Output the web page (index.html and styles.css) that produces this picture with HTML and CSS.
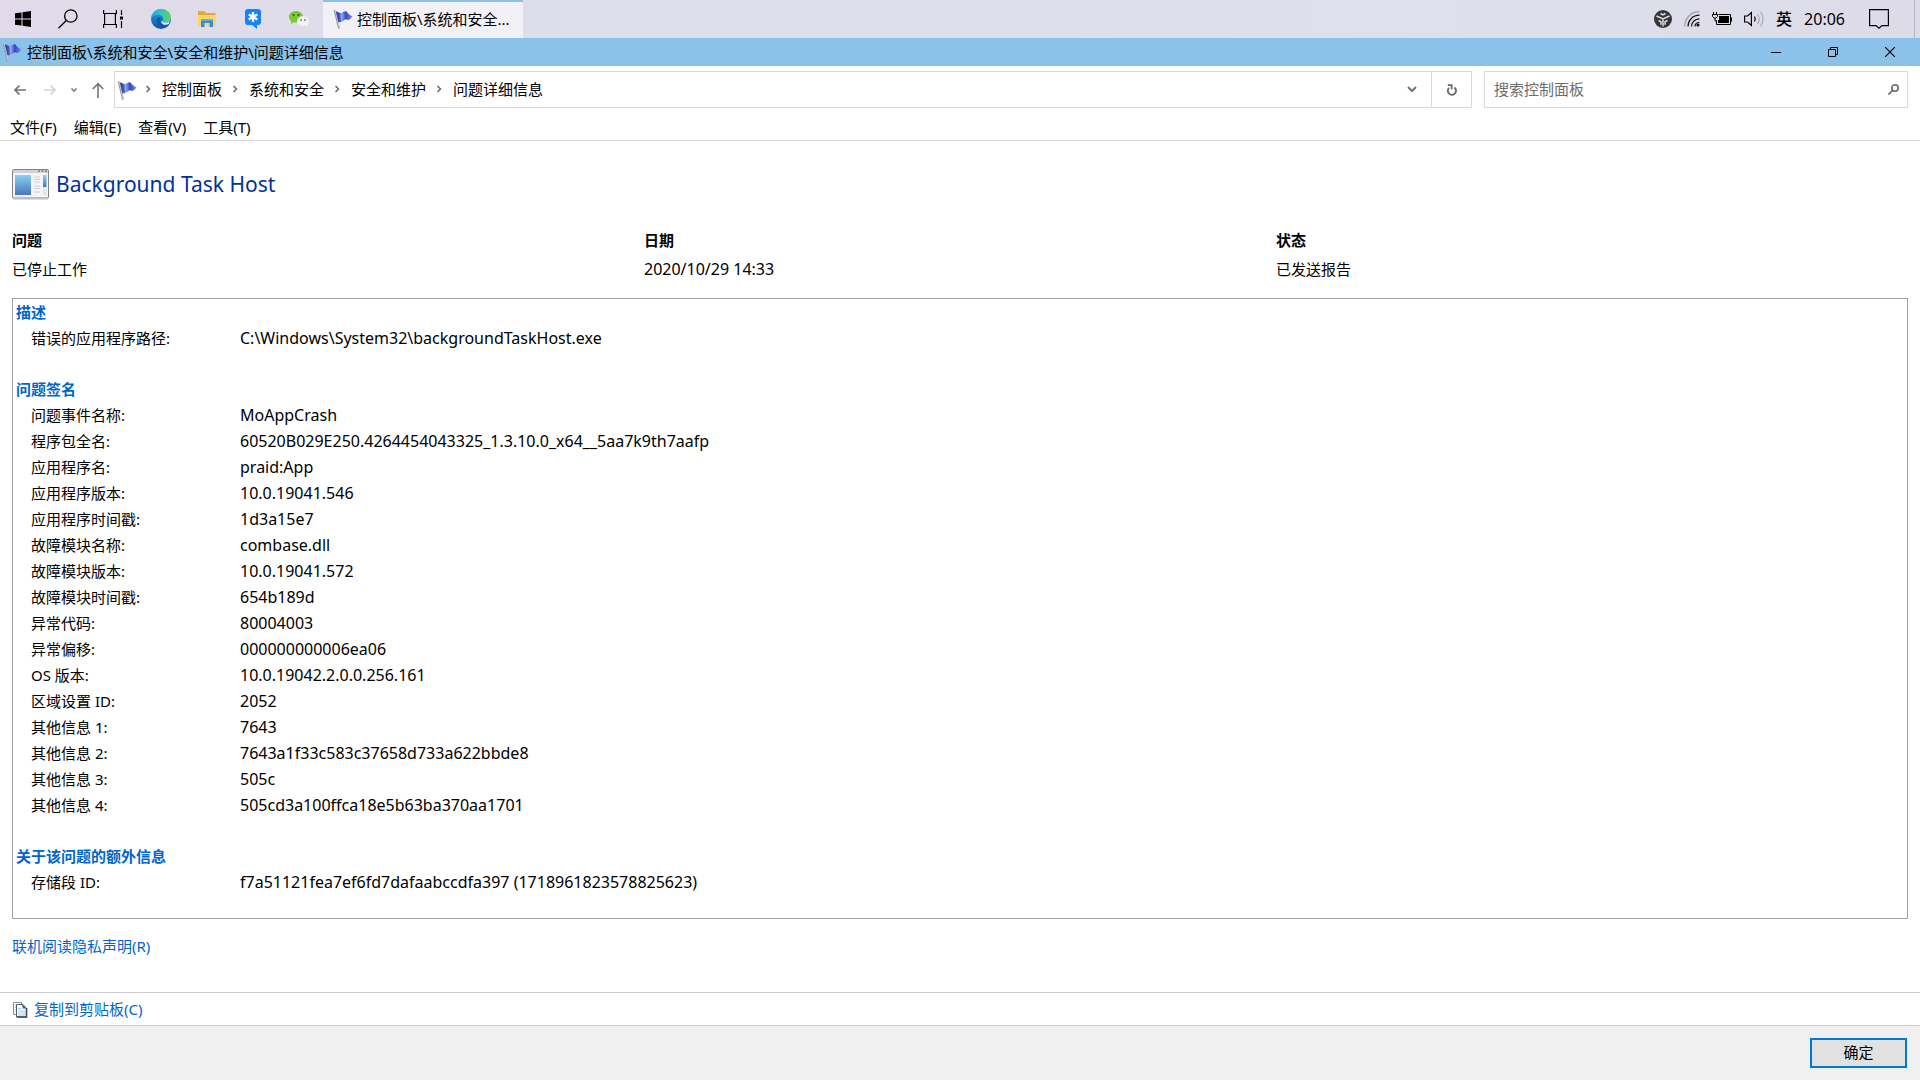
FILE: index.html
```html
<!DOCTYPE html>
<html lang="zh-CN">
<head>
<meta charset="utf-8">
<title>控制面板\系统和安全\安全和维护\问题详细信息</title>
<link rel="stylesheet" href="styles.css">
</head>
<body>
<svg class="defs" aria-hidden="true">
  <defs>
    <linearGradient id="flagBlue" x1="0" y1="0" x2="1" y2="0"><stop offset="0" stop-color="#3040a8"/><stop offset=".35" stop-color="#8faaf5"/><stop offset=".6" stop-color="#3346c0"/><stop offset="1" stop-color="#7a98ee"/></linearGradient>
    <linearGradient id="edgeA" x1="0" y1="0" x2="1" y2="0"><stop offset="0" stop-color="#2aa4dc"/><stop offset=".5" stop-color="#36c2c4"/><stop offset="1" stop-color="#62d455"/></linearGradient>
    <linearGradient id="edgeB" x1="0" y1="0" x2="0" y2="1"><stop offset="0" stop-color="#1b9de2"/><stop offset="1" stop-color="#0c59a4"/></linearGradient>
    <linearGradient id="paneBlue" x1="0" y1="0" x2="0" y2="1"><stop offset="0" stop-color="#8fd0f0"/><stop offset=".45" stop-color="#6ba7dc"/><stop offset="1" stop-color="#4a76b8"/></linearGradient>
    <symbol id="flag" viewBox="0 0 20 20">
      <path d="M.6 1l2.200.2 4.200 18-2 .5z" fill="#96989e"/><path d="M1.400 1.200l1 .1 3.800 17.500" fill="none" stroke="#dcdde2" stroke-width=".8"/>
      <path d="M3 2.500c2.500.4 3.500 2 5.500 1.300C10.500 3 11 1.600 13.500 2.400c1.300 2 3.500 4 6 4.800-1.800 3.200-4.200 4.400-6 3.200C11.500 9.200 9.500 14.500 5.300 13z" fill="url(#flagBlue)"/>
      <path d="M3 2.500c2 .4 3 1.500 4 1.500l1 8.800c-.8.400-1.700.4-2.700.2z" fill="#1c2a94" opacity=".45"/>
    </symbol>
    <symbol id="chev" viewBox="0 0 6 8"><path d="M1.500 1l3 3-3 3" fill="none" stroke="#686868" stroke-width="1.500"/></symbol>
  </defs>
</svg>

<header class="taskbar">
  <nav class="launchers" aria-label="任务栏">
    <button class="launch" aria-label="开始"><svg width="16" height="16" viewBox="0 0 16 16"><path d="M0 2.300l6.500-.9v6.100H0zM7.500 1.200L16 0v7.500H7.500zM0 8.500h6.500v6.100L0 13.700zM7.500 8.500H16V16l-8.500-1.200z"/></svg></button>
    <button class="launch" aria-label="搜索"><svg width="20" height="20" viewBox="0 0 20 20" fill="none" stroke="#000" stroke-width="1.300"><circle cx="12.800" cy="7" r="6.200"/><path d="M8.300 11.500L.5 19.300"/></svg></button>
    <button class="launch" aria-label="任务视图"><svg width="20" height="20" viewBox="0 0 20 20" fill="none" stroke="#000" stroke-width="1.200"><path d="M.6 1v3.500h12.800V1M.6 19v-3.500h12.800V19M1.600 4.500v11M12.400 4.500v11M18.500 1v5M18.500 12v7"/><path d="M17 7.500h3v3h-3z" fill="#000" stroke="none"/></svg></button>
    <span class="pinned">
      <button class="launch" aria-label="Edge"><svg width="20" height="20" viewBox="0 0 20 20"><circle cx="10" cy="10" r="10" fill="url(#edgeB)"/><path d="M.2 9.500C.6 4 4.800 0 10.200 0 16 0 20 4 20 8.300c0 3.200-2.400 5.300-5.300 5.300-2.200 0-3.400-.8-3.200-1.500.2-.5.800-.8.800-2.100 0-2.200-2.300-4-5.200-4C3.700 6 .9 8 .2 9.500z" fill="url(#edgeA)"/><path d="M7.200 8.500c-3 3.500 0 9.600 5.300 9.900 2 .1 4-.6 5.600-2.400-1.300.5-2.500.7-4 .5-3.500-.4-6-3-5.500-5.500.1-.8.500-1.500 1.200-2-.8-.5-1.800-.6-2.600-.5z" fill="#145499"/><path d="M11.600 11.500c-.7 1 .8 2.200 3.100 2.100 1.800 0 3.200-.7 4.100-1.600l-.8 2.400c-1.500 1.400-3.800 1.800-5.700 1-2-.9-2.700-2.900-.7-3.900z" fill="#e5e9f3"/></svg></button>
      <button class="launch" aria-label="文件资源管理器"><svg width="18" height="16" viewBox="0 0 18 16"><path d="M0 0h6l2 2h9.500v13H0z" fill="#e7a72e"/><path d="M0 4h18v11H0z" fill="#ffd567"/><path d="M3 16V8.500h12V16h-3.500v-4h-5v4z" fill="#3a8ad6"/><path d="M3 8.500h12V10H3z" fill="#5aa8ea"/></svg></button>
      <button class="launch" aria-label="待办"><svg width="16" height="20" viewBox="0 0 16 20"><path d="M3 0h10a3 3 0 013 3v10a3 3 0 01-3 3h-1v4l-5-4H3a3 3 0 01-3-3V3a3 3 0 013-3z" fill="#1682fb"/><path d="M8 3v10M3.700 5.500l8.600 5M3.700 10.500l8.600-5" stroke="#fff" stroke-width="2.300"/></svg></button>
      <button class="launch" aria-label="微信"><svg width="20" height="16" viewBox="0 0 20 16"><path d="M7 0c4 0 7 2.500 7 5.700S11 11.500 7 11.500c-.8 0-1.600-.1-2.300-.3L1.800 13l.5-2.800C.9 9.200 0 7.600 0 5.700 0 2.500 3 0 7 0z" fill="#7bc72f"/><circle cx="4.600" cy="4" r="1" fill="#31501a"/><circle cx="9.400" cy="4" r="1" fill="#31501a"/><ellipse cx="14" cy="10.300" rx="6" ry="5" fill="#f3f3f3"/><path d="M16.500 14l2 2 .3-3z" fill="#f3f3f3"/><circle cx="12" cy="9" r=".9" fill="#777"/><circle cx="16" cy="9" r=".9" fill="#777"/></svg></button>
    </span>
  </nav>
  <button class="task"><svg width="20" height="20"><use href="#flag"/></svg><span>控制面板\系统和安全...</span></button>
  <div class="tray">
    <svg width="18" height="18" viewBox="0 0 18 18"><circle cx="9" cy="9" r="9" fill="#363636"/><path d="M2.500 6L9 9l6.500-3M9 9v7.500M4.500 10.500l2.500 1.200v3M13.500 10.500L11 11.700v3M6.500 3.500L9 5l2.500-1.500" fill="none" stroke="#dddce8" stroke-width="1.500"/></svg>
    <svg width="16" height="16" viewBox="0 0 16 16" fill="none" stroke="#111" stroke-width="1.200"><path d="M.7 15.500C.7 7.200 7 .7 15.500.7" stroke="#9a9aa5"/><path d="M4 15.500C4 9.500 8.500 4.300 15.500 4.200M7.500 15.500c0-4 3-7.500 8-7.600M11 15.500c0-2 1.500-4 4.500-4"/><circle cx="14" cy="14" r="1.600" fill="#111" stroke="none"/></svg>
    <svg width="20" height="14" viewBox="0 0 20 14"><path d="M6.500 2.500h12v10h-14v-4" fill="none" stroke="#000"/><path d="M7 4h10v7H6V8h1zM18.500 5.500H20v4h-1.500z"/><path d="M1.500 0v2M4.500 0v2" fill="none" stroke="#000"/><path d="M.5 2.500h5v2L4 6H2L.5 4.500zM3 6v3h2" fill="none" stroke="#000"/></svg>
    <svg width="20" height="18" viewBox="0 0 20 18" fill="none" stroke="#000" stroke-width="1.200"><path d="M.6 6h3L7.400 2.500v13L3.600 12h-3z"/><path d="M10.500 6.500q1.500 2.500 0 5"/><path d="M13.500 4q3.500 5 0 10M16.500 1.500q5 7.500 0 15" stroke="#aaaab3"/></svg>
    <span class="ime">英</span>
    <time class="clock">20:06</time>
    <button class="notice" aria-label="通知"><svg width="20" height="20" viewBox="0 0 20 20"><path d="M.6.6h18.800v16h-6.400L10 19.200l-3-2.600H.6z" fill="none" stroke="#000" stroke-width="1.200"/></svg></button>
  </div>
</header>

<div class="titlebar">
  <svg width="20" height="20"><use href="#flag"/></svg>
  <h1>控制面板\系统和安全\安全和维护\问题详细信息</h1>
  <div class="winctl">
    <button aria-label="最小化"><svg width="10" height="10"><path d="M0 5.500h10" stroke="#000"/></svg></button>
    <button aria-label="还原"><svg width="10" height="10" fill="none" stroke="#000"><path d="M.5 2.500h7v7h-7zM2.500 2.500v-2h7v7h-2"/></svg></button>
    <button aria-label="关闭"><svg width="10" height="10"><path d="M0 0l10 10M10 0L0 10" stroke="#000" stroke-width="1.200"/></svg></button>
  </div>
</div>

<div class="navbar">
  <div class="history">
    <button aria-label="后退"><svg width="12" height="10" fill="none" stroke="#747474" stroke-width="1.600"><path d="M12 5H1M5.500.6L1 5l4.500 4.400"/></svg></button>
    <button aria-label="前进" disabled><svg width="12" height="10" fill="none" stroke="#d4d4d4" stroke-width="1.600"><path d="M0 5h11M6.500.6L11 5 6.500 9.400"/></svg></button>
    <button class="recent" aria-label="最近浏览的位置"><svg width="8" height="6" fill="none" stroke="#7d7d7d" stroke-width="1.600"><path d="M1.500 1.500L4 4l2.500-2.500"/></svg></button>
    <button aria-label="上移"><svg width="12" height="16" fill="none" stroke="#747474" stroke-width="1.600"><path d="M6 16V2M.8 7L6 1.600 11.200 7"/></svg></button>
  </div>
  <div class="address">
    <svg width="20" height="20"><use href="#flag"/></svg>
    <ol>
      <li><svg width="6" height="8"><use href="#chev"/></svg><a href="#">控制面板</a></li>
      <li><svg width="6" height="8"><use href="#chev"/></svg><a href="#">系统和安全</a></li>
      <li><svg width="6" height="8"><use href="#chev"/></svg><a href="#">安全和维护</a></li>
      <li><svg width="6" height="8"><use href="#chev"/></svg><a href="#">问题详细信息</a></li>
    </ol>
    <button class="drop" aria-label="历史记录"><svg width="10" height="7" fill="none" stroke="#747474" stroke-width="2"><path d="M1 1l4 4 4-4"/></svg></button>
    <button class="refresh" aria-label="刷新"><svg width="10" height="12" viewBox="0 0 10 12" fill="none" stroke="#686868" stroke-width="1.800"><path d="M2 3.800a4.100 4.100 0 105.500-.3"/><path d="M.8 1.200h3.800v4"/></svg></button>
  </div>
  <label class="search">
    <input type="search" placeholder="搜索控制面板" aria-label="搜索控制面板">
    <svg width="11" height="11" viewBox="0 0 11 11" fill="none" stroke="#686868" stroke-width="1.600"><circle cx="7" cy="4" r="3.200"/><path d="M4.700 6.300L.5 10.500"/></svg>
  </label>
</div>

<nav class="menubar" aria-label="菜单">
  <button>文件(F)</button><button>编辑(E)</button><button>查看(V)</button><button>工具(T)</button>
</nav>

<main>
  <div class="apphead">
    <svg width="37" height="31" viewBox="0 0 37 31"><rect x=".5" y=".5" width="36" height="28.500" rx="1" fill="#f4f5f6" stroke="#7d8388"/><path d="M1 1h35v3H1z" fill="#cfd3d8"/><path d="M26 2h2M29.500 2h2M33 2h2" stroke="#555"/><path d="M3 6h16v20H3z" fill="url(#paneBlue)"/><path d="M22 8h6M22 10.500h6M22 13h6M22 17h6M22 19.500h6M22 23h6" stroke="#cdcfd2"/><path d="M31 6h3.500v12H31z" fill="url(#paneBlue)"/><path d="M31 18h3.500v8H31z" fill="#e4e6e8"/><path d="M3 28h4M8 28h4" stroke="#c3ccd6"/><path d="M1 30.500h35" stroke="#ddd"/></svg>
    <h2>Background Task Host</h2>
  </div>
  <dl class="summary">
    <div><dt>问题</dt><dd>已停止工作</dd></div>
    <div><dt>日期</dt><dd class="value">2020/10/29 14:33</dd></div>
    <div><dt>状态</dt><dd>已发送报告</dd></div>
  </dl>
  <div class="report">
    <section>
      <h3>描述</h3>
      <table>
        <tr><th scope="row">错误的应用程序路径:</th><td>C:\Windows\System32\backgroundTaskHost.exe</td></tr>
      </table>
    </section>
    <section>
      <h3>问题签名</h3>
      <table>
        <tr><th scope="row">问题事件名称:</th><td>MoAppCrash</td></tr>
        <tr><th scope="row">程序包全名:</th><td>60520B029E250.4264454043325_1.3.10.0_x64__5aa7k9th7aafp</td></tr>
        <tr><th scope="row">应用程序名:</th><td>praid:App</td></tr>
        <tr><th scope="row">应用程序版本:</th><td>10.0.19041.546</td></tr>
        <tr><th scope="row">应用程序时间戳:</th><td>1d3a15e7</td></tr>
        <tr><th scope="row">故障模块名称:</th><td>combase.dll</td></tr>
        <tr><th scope="row">故障模块版本:</th><td>10.0.19041.572</td></tr>
        <tr><th scope="row">故障模块时间戳:</th><td>654b189d</td></tr>
        <tr><th scope="row">异常代码:</th><td>80004003</td></tr>
        <tr><th scope="row">异常偏移:</th><td>000000000006ea06</td></tr>
        <tr><th scope="row">OS 版本:</th><td>10.0.19042.2.0.0.256.161</td></tr>
        <tr><th scope="row">区域设置 ID:</th><td>2052</td></tr>
        <tr><th scope="row">其他信息 1:</th><td>7643</td></tr>
        <tr><th scope="row">其他信息 2:</th><td>7643a1f33c583c37658d733a622bbde8</td></tr>
        <tr><th scope="row">其他信息 3:</th><td>505c</td></tr>
        <tr><th scope="row">其他信息 4:</th><td>505cd3a100ffca18e5b63ba370aa1701</td></tr>
      </table>
    </section>
    <section>
      <h3>关于该问题的额外信息</h3>
      <table>
        <tr><th scope="row">存储段 ID:</th><td>f7a51121fea7ef6fd7dafaabccdfa397 (1718961823578825623)</td></tr>
      </table>
    </section>
  </div>
  <a class="privacy" href="#">联机阅读隐私声明(R)</a>
</main>

<div class="copybar">
  <a href="#"><svg width="16" height="17" viewBox="0 0 16 17"><path d="M1.500 1.500h8v12h-8z" fill="#fff" stroke="#8d8d8d"/><path d="M3 4h2M3 6.500h1M3 9h1" stroke="#8cc4ea"/><path d="M4.500 3.500h6.500l3.500 4v8.500h-10z" fill="#fff" stroke="#4d5868"/><path d="M8 1l6.500 6.500h-3.500l-1-3.500z" fill="#3f5f8a"/><path d="M14.500 7v9H5" fill="none" stroke="#3c4658" stroke-width="1.600"/><path d="M6 7.500h3.500M6 10h7M6 12h7M6 14h7" stroke="#9ccbec"/></svg>复制到剪贴板(C)</a>
</div>
<footer><button class="ok">确定</button></footer>
</body>
</html>
```
FILE: styles.css
```css
* { box-sizing: border-box; }
body {
  margin: 0;
  min-height: 100vh;
  display: flex;
  flex-direction: column;
  background: #fff;
  color: #000;
  font: 15px/26px "Noto Sans", "Noto Sans CJK SC", sans-serif;
}
button { margin: 0; padding: 0; border: 0; background: none; color: inherit; font: inherit; }
button, svg { flex: none; }
svg { display: block; }
a { color: #0066cc; text-decoration: none; }
h1, h2, h3, dl, dd, ol { margin: 0; padding: 0; font-size: inherit; font-weight: 400; }
.defs { position: absolute; width: 0; height: 0; }

.taskbar {
  display: flex;
  height: 38px;
  padding-right: 5px;
  background: linear-gradient(90deg, #e2dae8, #dddfec 35%, #dfe0ec 75%, #dddbe8);
}
.launchers, .pinned { display: flex; }
.launch { width: 45px; display: flex; align-items: center; justify-content: center; }
.pinned { margin: 0 1px 0 3px; }
.pinned .launch { width: 46px; }
.task {
  width: 200px;
  padding: 0 10px 2px;
  display: flex;
  align-items: center;
  gap: 4px;
  border-top: 2px solid #8ac2ea;
  background: #f2f1f7;
  white-space: nowrap;
}
.tray {
  flex: 1;
  display: flex;
  align-items: center;
  justify-content: flex-end;
  gap: 12px;
  border-right: 1px solid #b4b3c0;
}
.ime { font-size: 16px; font-weight: 500; }
.clock { font-size: 16px; }
.notice { padding: 0 25px 0 12px; }

.titlebar {
  display: flex;
  align-items: center;
  gap: 5px;
  height: 28px;
  padding: 0 2px;
  background: #8ac2ea;
}
.winctl { display: flex; margin-left: auto; }
.winctl button { width: 57px; height: 28px; display: flex; align-items: center; justify-content: center; }

.navbar { display: flex; height: 42px; padding: 5px 12px 0 0; }
.history { display: flex; width: 114px; padding-left: 5px; }
.history button { width: 30px; display: flex; align-items: center; justify-content: center; }
.history .recent { width: 18px; }
.address { flex: 1; display: flex; align-items: center; border: 1px solid #d9d9d9; padding-left: 2px; }
.address ol { flex: 1; display: flex; padding-bottom: 2px; list-style: none; }
.address li { display: flex; align-items: center; gap: 11px; padding-left: 8px; }
.address li + li { padding-left: 10px; }
.address a { color: #000; }
.address button { height: 100%; display: flex; align-items: center; justify-content: center; }
.address .drop { width: 38px; }
.address .refresh { width: 40px; border-left: 1px solid #d9d9d9; }
.search { width: 424px; margin-left: 12px; display: flex; align-items: center; border: 1px solid #d9d9d9; padding: 0 8px 0 9px; }
.search input { flex: 1; min-width: 0; padding: 0 0 2px; border: 0; outline: 0; background: none; font: inherit; }
.search input::placeholder { color: #6d6d6d; opacity: 1; }

.menubar { display: flex; gap: 17px; height: 33px; padding: 5px 10px 0; border-bottom: 1px solid #d9d9d9; }

main { flex: 1; padding: 28px 12px 0; }
.apphead { display: flex; align-items: center; gap: 7px; height: 31px; }
.apphead h2 { padding-bottom: 2px; color: #003399; font-size: 21px; }
.summary { display: grid; grid-template-columns: repeat(3, 1fr); padding: 26px 0 14px; line-height: 29px; }
.summary dt { font-weight: 700; }
.report { border: 1px solid #a0a0a0; padding: 0 3px 23px; }
.report section + section { margin-top: 25px; }
.report h3 { color: #0066cc; font-weight: 700; }
.report table { width: 100%; border-collapse: collapse; }
.report th { width: 224px; padding: 0 0 0 15px; text-align: left; font-weight: 400; }
.report td { padding: 0; }
.report td, .value { font-size: 16px; }
.privacy { display: inline-block; margin-top: 14px; }

.copybar { height: 34px; padding: 3px 12px; border: solid #ccc; border-width: 1px 0; }
.copybar a { display: inline-flex; align-items: center; gap: 6px; }
footer { display: flex; justify-content: flex-end; padding: 12px 13px; background: #f0f0f0; }
.ok { width: 97px; height: 30px; padding-bottom: 2px; border: 2px solid #0078d7; background: #e1e1e1; line-height: 24px; }
```
